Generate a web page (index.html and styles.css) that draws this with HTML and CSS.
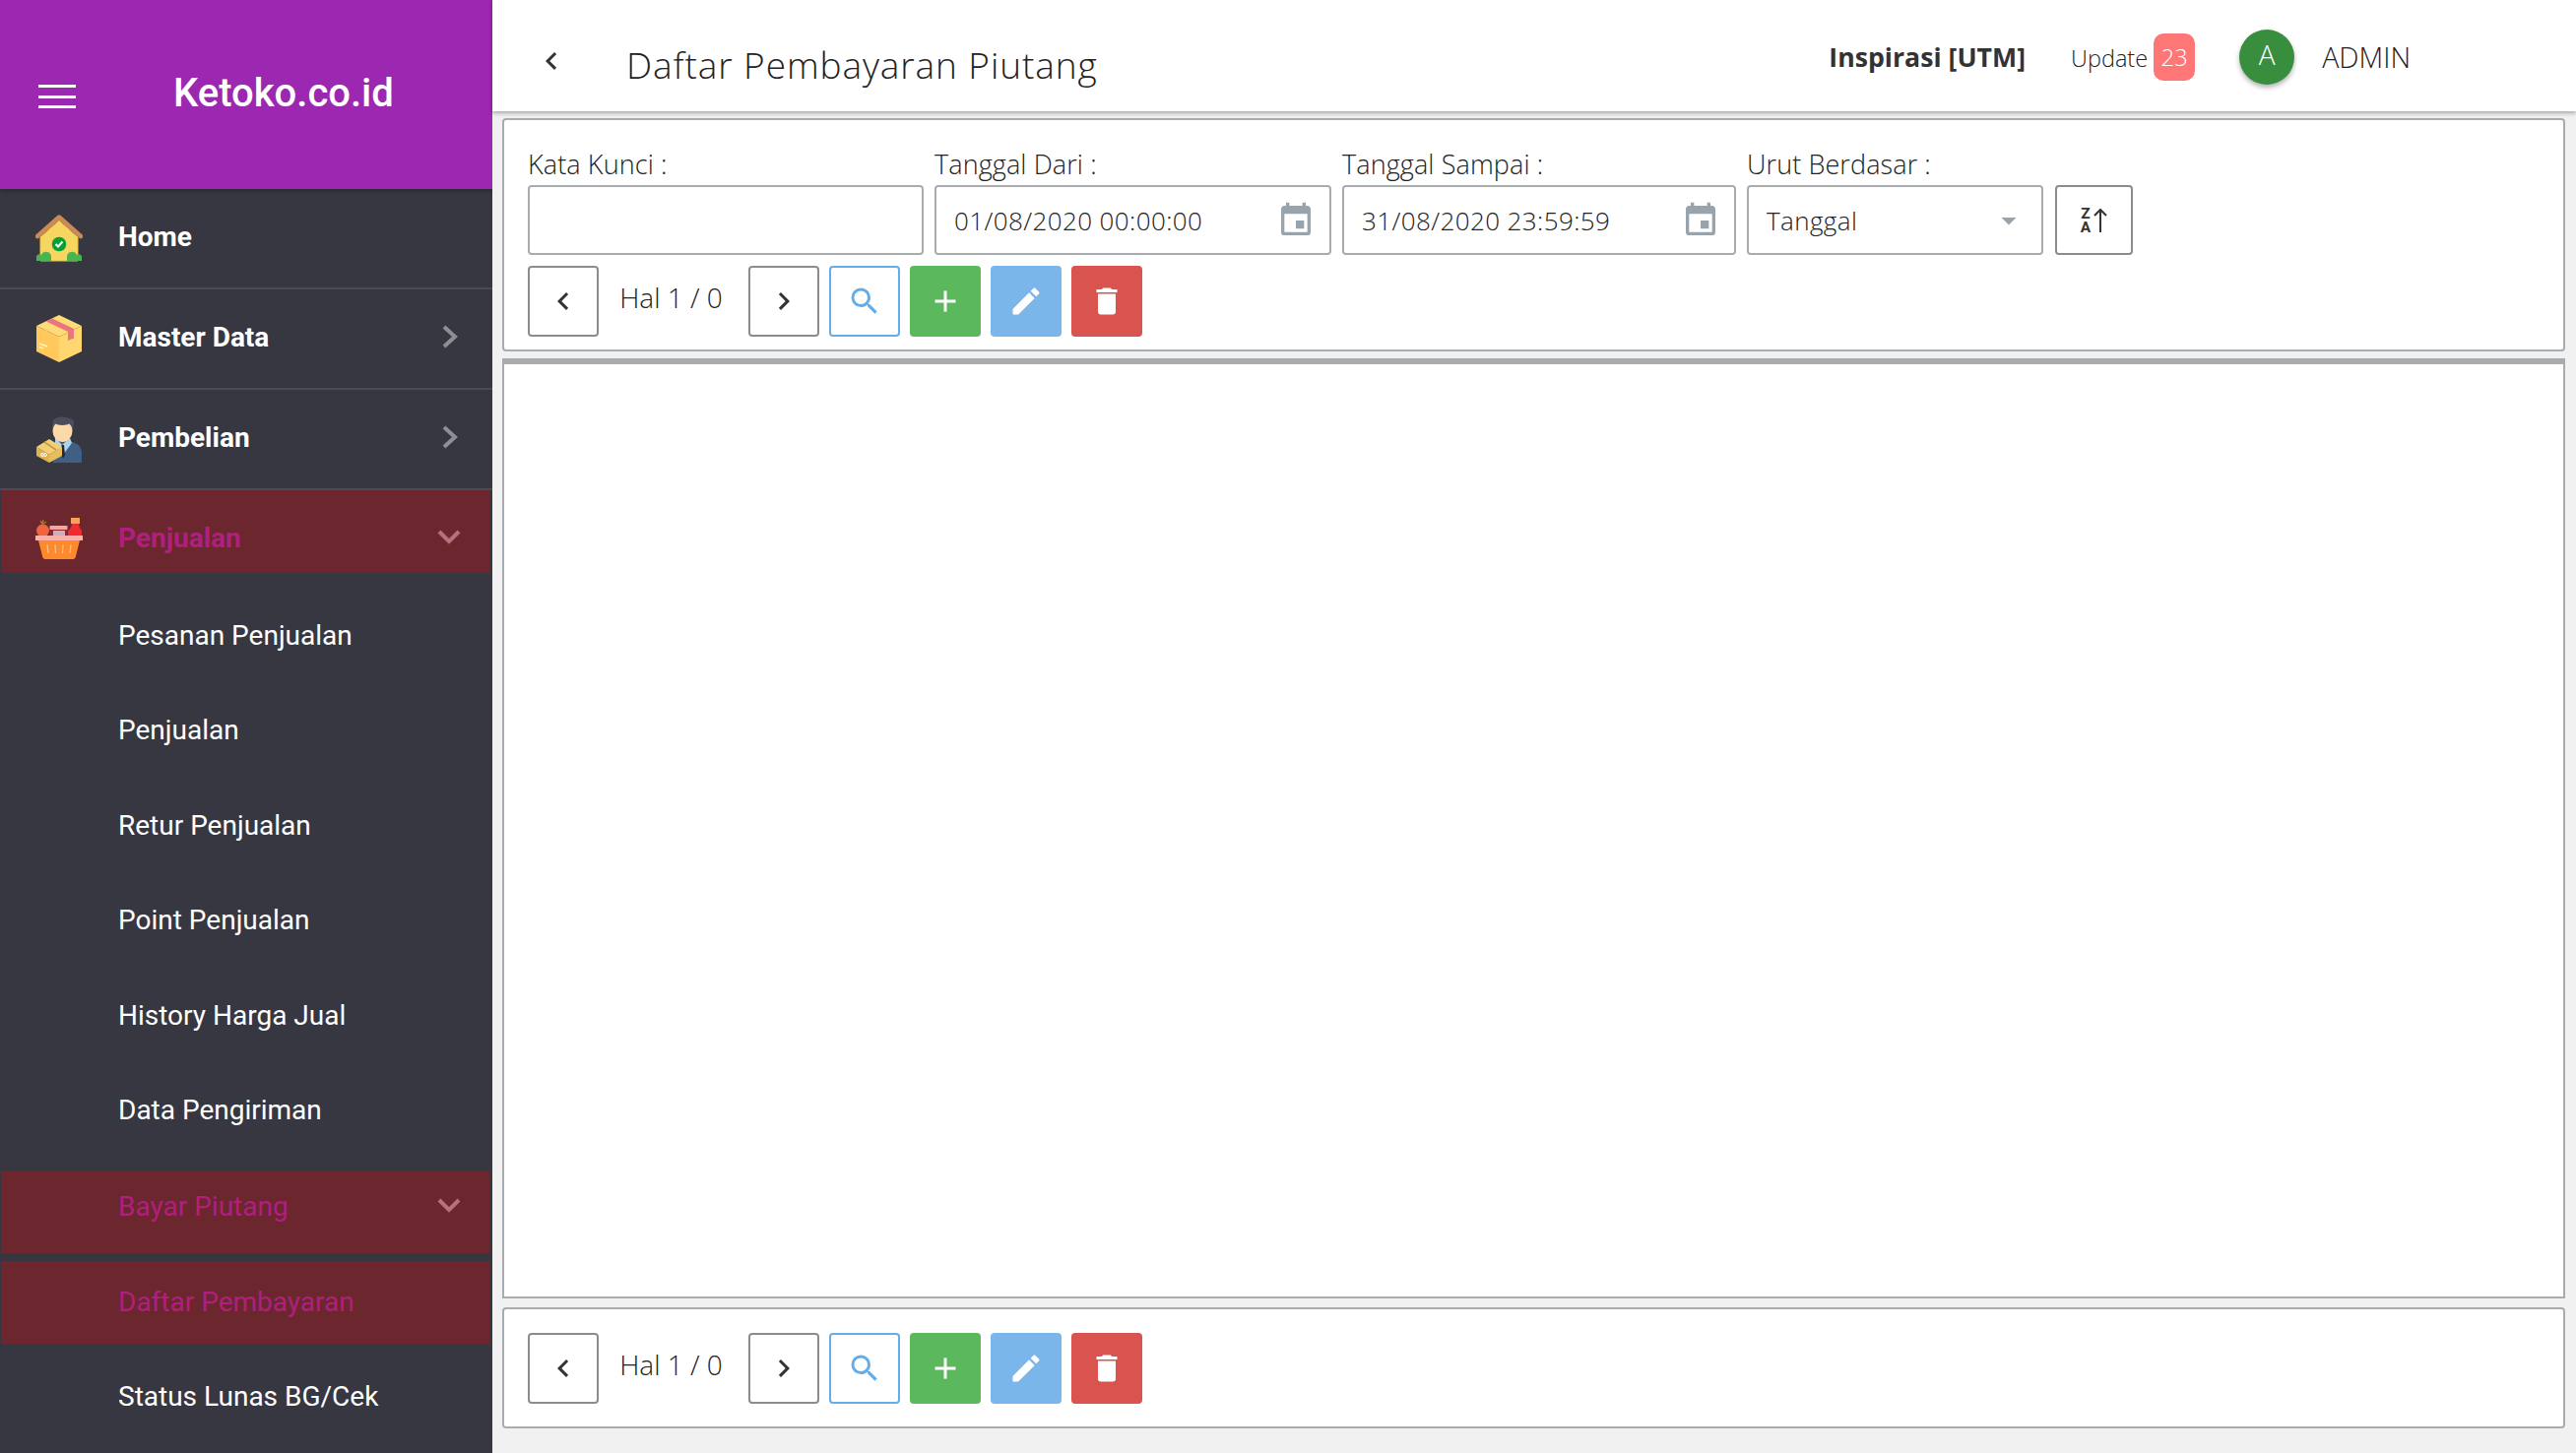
FILE: index.html
```html
<!DOCTYPE html>
<html lang="id">
<head>
<meta charset="utf-8">
<title>Daftar Pembayaran Piutang</title>
<link rel="stylesheet" href="styles.css">
</head>
<body>
<svg class="defs" aria-hidden="true">
  <symbol id="i-left" viewBox="0 0 24 24"><path d="M15.41,16.58L10.83,12L15.41,7.41L14,6L8,12L14,18L15.41,16.58Z"/></symbol>
  <symbol id="i-right" viewBox="0 0 24 24"><path d="M8.59,16.58L13.17,12L8.59,7.41L10,6L16,12L10,18L8.59,16.58Z"/></symbol>
  <symbol id="i-search" viewBox="0 0 24 24"><path d="M9.5,3A6.5,6.5 0 0,1 16,9.5C16,11.11 15.41,12.59 14.44,13.73L14.71,14H15.5L20.5,19L19,20.5L14,15.5V14.71L13.73,14.44C12.59,15.41 11.11,16 9.5,16A6.5,6.5 0 0,1 3,9.5A6.5,6.5 0 0,1 9.5,3M9.5,5C7,5 5,7 5,9.5C5,12 7,14 9.5,14C12,14 14,12 14,9.5C14,7 12,5 9.5,5Z"/></symbol>
  <symbol id="i-plus" viewBox="0 0 24 24"><path d="M19,13H13V19H11V13H5V11H11V5H13V11H19V13Z"/></symbol>
  <symbol id="i-pencil" viewBox="0 0 24 24"><path d="M20.71,7.04C21.1,6.65 21.1,6 20.71,5.63L18.37,3.29C18,2.9 17.35,2.9 16.96,3.29L15.12,5.12L18.87,8.87M3,17.25V21H6.75L17.81,9.93L14.06,6.18L3,17.25Z"/></symbol>
  <symbol id="i-delete" viewBox="0 0 24 24"><path d="M19,4H15.5L14.5,3H9.5L8.5,4H5V6H19M6,19A2,2 0 0,0 8,21H16A2,2 0 0,0 18,19V7H6V19Z"/></symbol>
  <symbol id="i-cal" viewBox="0 0 24 24"><path d="M19,19H5V8H19M16,1V3H8V1H6V3H5C3.89,3 3,3.89 3,5V19A2,2 0 0,0 5,21H19A2,2 0 0,0 21,19V5C21,3.89 20.1,3 19,3H18V1M17,12H12V17H17V12Z"/></symbol>
  <symbol id="i-nav-right" viewBox="0 0 16 24"><path d="M2,2 L13,12 L2,22" fill="none" stroke="currentColor" stroke-width="4"/></symbol>
  <symbol id="i-nav-down" viewBox="0 0 24 16"><path d="M2,2 L12,12 L22,2" fill="none" stroke="currentColor" stroke-width="4"/></symbol>
</svg>

<div class="app">
  <aside class="sidebar">
    <header class="brand">
      <svg class="burger" viewBox="0 0 38 24"><path d="M0,0H38V3H0ZM0,11H38V14H0ZM0,21H38V24H0Z"/></svg>
      <span class="brand-name">Ketoko.co.id</span>
    </header>
    <nav class="menu">
      <a class="row">
        <svg class="row-icon" viewBox="0 0 48 48">
          <path d="M5,23 L24,6 L43,23 V47 H5Z" fill="#f6d660" stroke="#eec23f" stroke-width="1"/>
          <path d="M2,22 L24,2.5 L46,22" fill="none" stroke="#c98a58" stroke-width="4.5" stroke-linecap="round" stroke-linejoin="round"/>
          <path d="M1,47 V42 Q3,39 6,41 Q8,37 12,38 Q15,38 16,42 V47Z M32,47 V42 Q33,38 36,38 Q40,37 42,41 Q45,39 47,42 V47Z" fill="#4bb34f"/>
          <circle cx="24" cy="30" r="7.3" fill="#07a033"/>
          <path d="M20.5,30 L23,32.5 L27.5,27.5" fill="none" stroke="#fff" stroke-width="2"/>
        </svg>
        <span class="row-label">Home</span>
      </a>
      <a class="row">
        <svg class="row-icon" viewBox="0 0 48 48">
          <path d="M24,0 L47,11 L24,22 L1,11Z" fill="#ffdb78"/>
          <path d="M1,11 L24,22 V48 L1,37Z" fill="#ffc95b"/>
          <path d="M47,11 L24,22 V48 L47,37Z" fill="#ffd66f"/>
          <path d="M11,6.5 L17,3.5 L39,14 V23.5 L33,26 V17Z" fill="#e9757d"/>
          <path d="M4,29 L12,32 M4,32.5 L8,34" stroke="#fff2c8" stroke-width="1.4"/>
        </svg>
        <span class="row-label">Master Data</span>
        <svg class="nav-chev-right"><use href="#i-nav-right"/></svg>
      </a>
      <a class="row">
        <svg class="row-icon" viewBox="0 0 48 48">
          <path d="M20,33 Q22,27 30,26 L34,26 Q45,28 47,36 V48 H18Z" fill="#3f5f85"/>
          <path d="M20,22 L27,30 L35,23 L37,28 L28,40 L20,30Z" fill="#a9d6ee"/>
          <path d="M26.5,30 H29 L30,40 L28,44 L26,40Z" fill="#232838"/>
          <path d="M17.5,16 Q19,20 20,16 V8 H36 V18 Q39,13 39,6 Q38,3 34,3 Q26,0 20,3 Q16,4 17.5,16Z" fill="#4a4d5c"/>
          <ellipse cx="27.5" cy="16" rx="10" ry="11" fill="#fbd9a8"/>
          <path d="M19,8 Q27,12 36,8 L37,4 Q28,0 20,3Z" fill="#4a4d5c"/>
          <path d="M14,24 L27,32 L14,40 L1,32Z" fill="#f2cf75"/>
          <path d="M1,32 L14,40 V48 L1,41Z" fill="#dfb354"/>
          <path d="M27,32 L14,40 V48 L27,41Z" fill="#e8be5d"/>
          <path d="M9,27 L21,35" stroke="#c49a45" stroke-width="1.6"/>
          <circle cx="7" cy="40" r="1.5" fill="none" stroke="#fff" stroke-width="1"/>
          <circle cx="10" cy="40" r="1.5" fill="none" stroke="#fff" stroke-width="1"/>
        </svg>
        <span class="row-label">Pembelian</span>
        <svg class="nav-chev-right"><use href="#i-nav-right"/></svg>
      </a>
      <a class="row row-active">
        <svg class="row-icon" viewBox="0 0 48 48">
          <path d="M36,3 H45 V9 H36Z" fill="#f9a15a"/>
          <path d="M37,9 H44 Q44,13 47,16 V22 H33 V16 Q37,13 37,9Z" fill="#ef2b30"/>
          <path d="M15,11 H32 V22 H15Z" fill="#9c2430"/>
          <path d="M14.5,11 H32.5 V15 H14.5Z" fill="#f0a7a2"/>
          <path d="M18,16 H30 V22 H18Z" fill="#c7b1bb"/>
          <circle cx="7.5" cy="16" r="6.5" fill="#f0653f"/>
          <path d="M7,9.5 L5,6 M7,9.5 L8,5 M7,9.5 L11,7" stroke="#a77a20" stroke-width="1.4"/>
          <path d="M0,21 H48 V26 H0Z" fill="#fbb1a9"/>
          <path d="M3,26 H45 L41,42 Q40.5,45 38,45 H10 Q7.5,45 7,42Z" fill="#ff8a2c"/>
          <path d="M12,30 L13,39 M20,30 L20.5,39 M28,30 L27.5,39 M36,30 L35,39" stroke="#ffc09a" stroke-width="1.2"/>
        </svg>
        <span class="row-label">Penjualan</span>
        <svg class="nav-chev-down"><use href="#i-nav-down"/></svg>
      </a>
      <a class="sub sub-first">Pesanan Penjualan</a>
      <a class="sub">Penjualan</a>
      <a class="sub">Retur Penjualan</a>
      <a class="sub">Point Penjualan</a>
      <a class="sub">History Harga Jual</a>
      <a class="sub">Data Pengiriman</a>
      <a class="sub sub-group">Bayar Piutang<svg class="nav-chev-down"><use href="#i-nav-down"/></svg></a>
      <a class="sub sub-current">Daftar Pembayaran</a>
      <a class="sub">Status Lunas BG/Cek</a>
    </nav>
  </aside>

  <main class="main">
    <header class="topbar">
      <svg class="back"><use href="#i-left"/></svg>
      <h1 class="page-title">Daftar Pembayaran Piutang</h1>
      <strong class="company">Inspirasi [UTM]</strong>
      <span class="update">Update</span>
      <span class="badge">23</span>
      <span class="avatar">A</span>
      <span class="user">ADMIN</span>
    </header>

    <section class="panel panel-filter">
      <div class="fields">
        <label class="field field-key"><span class="field-label">Kata Kunci :</span><span class="control"></span></label>
        <label class="field field-from"><span class="field-label">Tanggal Dari :</span><span class="control"><span class="value">01/08/2020 00:00:00</span><svg class="cal"><use href="#i-cal"/></svg></span></label>
        <label class="field field-to"><span class="field-label">Tanggal Sampai :</span><span class="control"><span class="value">31/08/2020 23:59:59</span><svg class="cal"><use href="#i-cal"/></svg></span></label>
        <label class="field field-sort"><span class="field-label">Urut Berdasar :</span><span class="control"><span class="value">Tanggal</span><svg class="caret" viewBox="0 0 24 24"><path d="M7,10L12,15L17,10H7Z"/></svg></span></label>
        <button class="sort-btn"><span class="az">Z<br>A</span><svg class="sort-arrow" viewBox="0 0 14 26"><path d="M7,25 V2 M1,8 L7,2 L13,8" fill="none" stroke="#333" stroke-width="2"/></svg></button>
      </div>
      <div class="toolbar">
        <button class="btn"><svg class="ico"><use href="#i-left"/></svg></button>
        <span class="pager">Hal 1 / 0</span>
        <button class="btn"><svg class="ico"><use href="#i-right"/></svg></button>
        <button class="btn btn-search"><svg class="ico"><use href="#i-search"/></svg></button>
        <button class="btn btn-add"><svg class="ico"><use href="#i-plus"/></svg></button>
        <button class="btn btn-edit"><svg class="ico"><use href="#i-pencil"/></svg></button>
        <button class="btn btn-del"><svg class="ico"><use href="#i-delete"/></svg></button>
      </div>
    </section>

    <section class="panel panel-list"></section>

    <section class="panel panel-foot">
      <div class="toolbar">
        <button class="btn"><svg class="ico"><use href="#i-left"/></svg></button>
        <span class="pager">Hal 1 / 0</span>
        <button class="btn"><svg class="ico"><use href="#i-right"/></svg></button>
        <button class="btn btn-search"><svg class="ico"><use href="#i-search"/></svg></button>
        <button class="btn btn-add"><svg class="ico"><use href="#i-plus"/></svg></button>
        <button class="btn btn-edit"><svg class="ico"><use href="#i-pencil"/></svg></button>
        <button class="btn btn-del"><svg class="ico"><use href="#i-delete"/></svg></button>
      </div>
    </section>
  </main>
</div>
</body>
</html>
```

FILE: styles.css
```css
* { box-sizing: border-box; }
html, body { margin: 0; height: 100%; }
body {
  background: #f1f1f1;
  color: #333;
  font-family: "Open Sans", "Noto Sans", sans-serif;
  overflow: hidden;
}
.defs { display: none; }
.app { display: flex; height: 1476px; }

/* Sidebar */
.sidebar {
  width: 500px;
  flex: none;
  background: #363741;
  font-family: Roboto, sans-serif;
  overflow: hidden;
}
.brand {
  height: 192px;
  background: #9c27b0;
  color: #fff;
  display: flex;
  align-items: flex-start;
  box-shadow: 0 2px 4px rgba(0,0,0,.3);
  position: relative;
}
.burger { width: 38px; height: 24px; margin: 86px 0 0 39px; fill: #fff; flex: none; }
.brand-name { margin: 70px 0 0 99px; font-size: 40px; line-height: 50px; font-weight: 500; }
.row {
  height: 102px;
  display: flex;
  align-items: center;
  padding-left: 36px;
  border-bottom: 2px solid #4a4b55;
  color: #fff;
  font-size: 28px;
  font-weight: 700;
  position: relative;
}
.row-icon { width: 48px; height: 48px; flex: none; }
.row-label { margin: 0 0 3px 36px; }
.nav-chev-right { position: absolute; left: 449px; top: 36px; width: 16px; height: 24px; color: #8e8f95; }
.nav-chev-down { position: absolute; left: 444px; width: 24px; height: 16px; color: #b5727e; }
.row-active {
  height: 84px;
  margin: 0 3px 0 1px;
  padding: 13px 0 0 35px;
  background: #6b262e;
  border-bottom: 0;
  color: #b01f7e;
}
.row-active .row-label { margin-bottom: 0; }
.row-active .nav-chev-down { left: 443px; top: 40px; }
.sub {
  height: 84px;
  display: flex;
  align-items: center;
  padding-left: 120px;
  margin-bottom: 12.5px;
  color: #fff;
  font-size: 28px;
  position: relative;
}
.sub-first { margin-top: 21px; }
.sub-group, .sub-current {
  margin-right: 3px;
  margin-left: 1px;
  padding-left: 119px;
  background: #6b262e;
  color: #b01f7e;
}
.sub-group { margin-top: 19.5px; margin-bottom: 8px; padding-bottom: 12px; }
.sub-group .nav-chev-down { left: 443px; top: 28px; }
.sub-current { margin-bottom: 11px; padding-bottom: 2px; }

/* Main */
.main { flex: 1; min-width: 0; display: flex; flex-direction: column; padding: 0 11px 25px 10px; }
.topbar {
  height: 113px;
  flex: none;
  margin: 0 -11px 7px -10px;
  background: #fff;
  box-shadow: 0 2px 4px rgba(0,0,0,.3);
  display: flex;
  align-items: flex-start;
  position: relative;
}
.back { width: 36px; height: 36px; margin: 44px 0 0 42px; fill: #333; flex: none; }
.page-title { margin: 44px 0 0 58px; font-size: 37px; line-height: 44px; font-weight: 300; letter-spacing: .9px; color: #222; }
.company { margin: 39px 0 0 auto; font-size: 26.7px; line-height: 38px; font-weight: 700; color: #333; }
.update { margin: 40px 0 0 46px; font-size: 23.5px; line-height: 38px; font-weight: 300; color: #222; }
.badge {
  width: 42px; height: 48px; margin: 34px 0 0 6px;
  border-radius: 10px;
  background: #ff7676;
  color: #fff;
  font-size: 24px;
  font-weight: 300;
  line-height: 48px;
  text-align: center;
}
.avatar {
  width: 56px; height: 56px; margin: 30px 0 0 45px;
  border-radius: 50%;
  background: #388e3c;
  color: #fff;
  font-size: 28px;
  font-weight: 300;
  line-height: 50px;
  text-align: center;
  box-shadow: 0 3px 5px rgba(0,0,0,.3);
}
.user { margin: 38px 168px 0 28px; font-size: 28.6px; line-height: 40px; font-weight: 300; color: #222; }

.panel { background: #fff; border: 2px solid #a9acaf; border-radius: 4px; flex: none; }
.panel-filter { height: 237px; padding: 30px 24px 0; }
.panel-list { flex: 1; margin-top: 7px; border-top-width: 6px; border-radius: 0; }
.panel-foot { height: 123px; margin-top: 9px; padding: 24px 24px 0; }

.fields { display: flex; gap: 11px; align-items: flex-end; }
.field { display: flex; flex-direction: column; flex: none; }
.field-key { width: 402px; }
.field-from { width: 403px; }
.field-to { width: 400px; }
.field-sort { width: 301px; }
.field-label { font-size: 27px; line-height: 36px; font-weight: 300; letter-spacing: .1px; color: #222; padding-bottom: 3px; margin-top: -3px; }
.control {
  height: 71px;
  border: 2px solid #a9acaf;
  border-radius: 4px;
  display: flex;
  align-items: center;
  padding: 0 18px;
  position: relative;
}
.value { font-size: 26px; font-weight: 300; letter-spacing: .4px; color: #222; }
.cal { width: 40px; height: 40px; margin-left: auto; margin-right: -4px; fill: #99a3ab; flex: none; }
.caret { width: 36px; height: 36px; margin-left: auto; margin-right: -3px; fill: #99a3ab; flex: none; }
.sort-btn {
  width: 79px; height: 71px;
  margin-left: 1px;
  padding: 0;
  background: #fff;
  border: 2px solid #8a8d90;
  border-radius: 4px;
  display: flex;
  align-items: center;
  justify-content: center;
  gap: 3px;
}
.az { display: block; font: 700 15.5px/14px Roboto, sans-serif; color: #333; text-align: center; }
.sort-arrow { width: 14px; height: 26px; }

.toolbar { display: flex; align-items: center; gap: 10px; margin-top: 11px; }
.panel-foot .toolbar { margin-top: 0; }
.btn {
  width: 72px; height: 72px;
  padding: 0;
  background: #fff;
  border: 2px solid #8a8d90;
  border-radius: 4px;
  display: flex;
  align-items: center;
  justify-content: center;
  flex: none;
}
.ico { width: 36px; height: 36px; fill: #333; }
.pager { width: 142px; text-align: center; font-size: 28px; font-weight: 300; color: #222; margin: -8px 0 0; padding-left: 5px; }
.toolbar .btn + .pager { margin-left: -10px; }
.btn-search { border-color: #63aeea; }
.btn-search .ico { fill: #63aeea; }
.btn-add { background: #5cb85c; border-color: #5cb85c; }
.btn-edit { background: #7ab6ea; border-color: #7ab6ea; }
.btn-del { background: #d9534f; border-color: #d9534f; }
.btn-add .ico, .btn-edit .ico, .btn-del .ico { fill: #fff; }
```
